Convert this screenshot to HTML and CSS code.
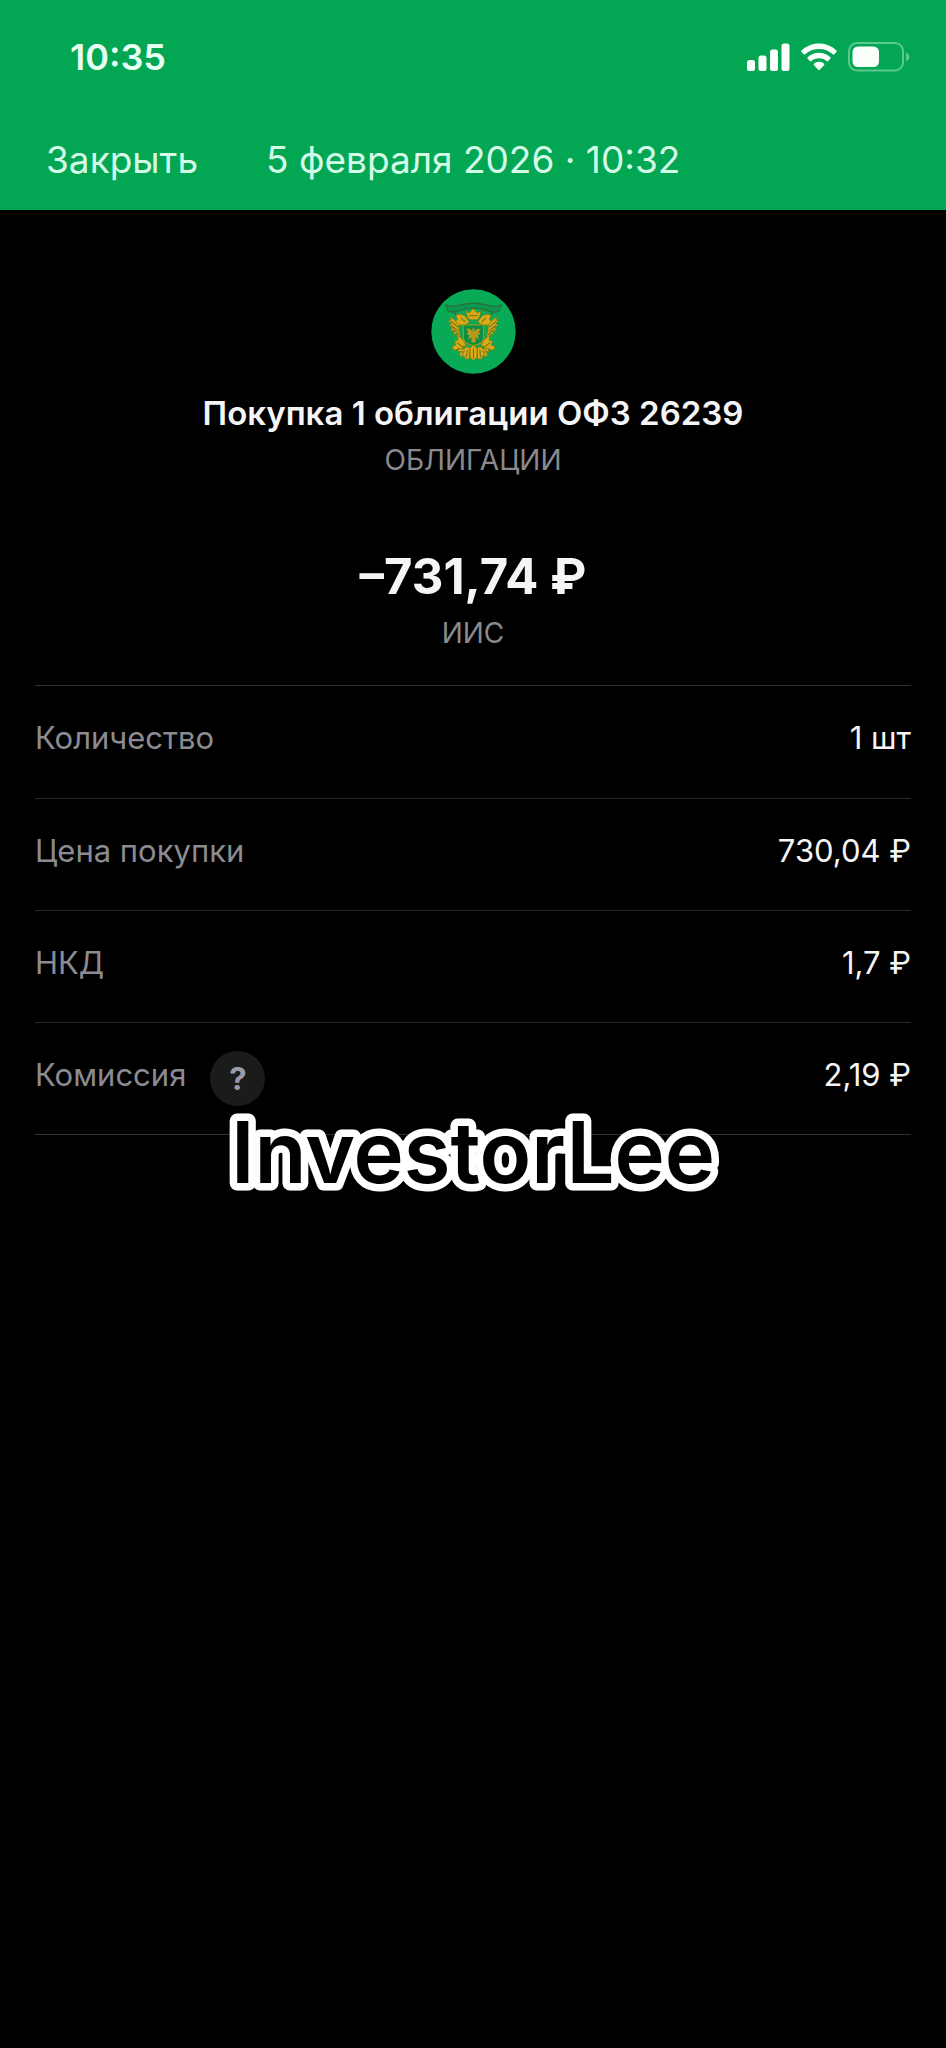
FILE: index.html
```
<!DOCTYPE html>
<html lang="ru">
<head>
    <meta charset="UTF-8">
    <meta name="viewport" content="width=device-width, initial-scale=1.0">
    <title>Покупка 1 облигации ОФЗ 26239</title>
    <link rel="stylesheet" href="styles.css">
</head>
<body>
    <header class="header">
        <div class="status-bar">
            <span class="clock">10:35</span>
            <div class="status-icons">
                <svg class="signal" viewBox="0 0 43 28" aria-hidden="true">
                    <rect x="0" y="17" width="8" height="11" rx="2.5"/>
                    <rect x="11.5" y="12.5" width="8" height="15.5" rx="2.5"/>
                    <rect x="23" y="6.5" width="8" height="21.5" rx="2.5"/>
                    <rect x="34.5" y="0.5" width="8" height="27.5" rx="2.5"/>
                </svg>
                <svg class="wifi" viewBox="0 0 36 28" aria-hidden="true">
                    <path d="M18 0.5C25 0.5 31 3.200 35.500 7.500C36 8 36 8.600 35.500 9.100L33.300 11.300C32.800 11.800 32.200 11.800 31.700 11.300C28 7.900 23.200 6 18 6S8 7.900 4.300 11.300C3.800 11.800 3.200 11.800 2.700 11.300L0.500 9.100C0 8.600 0 8 0.500 7.500C5 3.200 11 0.500 18 0.500Z"/>
                    <path d="M18 9.800C22.500 9.800 26.300 11.500 29.300 14.200C29.800 14.700 29.800 15.300 29.300 15.800L27.100 18C26.600 18.500 26 18.500 25.500 18C23.500 16.200 20.900 15.200 18 15.200S12.500 16.200 10.500 18C10 18.500 9.400 18.500 8.900 18L6.700 15.800C6.200 15.300 6.200 14.700 6.700 14.200C9.700 11.500 13.500 9.800 18 9.800Z"/>
                    <path d="M18 18.800C20 18.800 21.700 19.500 23 20.700C23.500 21.200 23.500 21.800 23 22.300L18.800 26.800C18.300 27.300 17.700 27.300 17.200 26.800L13 22.300C12.500 21.800 12.500 21.200 13 20.700C14.300 19.500 16 18.800 18 18.800Z"/>
                </svg>
                <svg class="battery" viewBox="0 0 62 30" aria-hidden="true">
                    <rect class="battery-frame" x="1" y="1" width="54" height="27.500" rx="8"/>
                    <path class="battery-cap" d="M58 10.500C60 11.300 61.300 13 61.300 15S60 18.700 58 19.500Z"/>
                    <rect x="4.500" y="4.500" width="26.500" height="20.500" rx="5.500"/>
                </svg>
            </div>
        </div>
        <nav class="nav-bar">
            <button class="close-btn" type="button">Закрыть</button>
            <span class="nav-title">5 февраля 2026 · 10:32</span>
        </nav>
    </header>

    <main class="operation">
        <!-- Issuer emblem -->
        <svg class="emblem" viewBox="0 0 254 254" aria-hidden="true">
            <circle cx="127" cy="127" r="126" fill="#08aa55"/>
            <!-- ribbon -->
            <path d="M44 47Q64 57 86 48Q127 37 168 48Q190 57 210 47L203 66Q184 73 168 64Q127 50 86 64Q70 73 51 66Z" fill="#0b9a4d" stroke="#2b7040" stroke-width="4"/>
            <path d="M70 70Q78 84 92 78M184 70Q176 84 162 78" fill="none" stroke="#2b7040" stroke-width="5"/>
            <!-- crown, heads, wings -->
            <g fill="#d9aa16" stroke="#75741c" stroke-width="2">
                <path d="M104 64L114 72L126 58L139 72L149 64L146 82L139 92H115L108 82Z"/>
                <path d="M74 78Q94 70 106 86L114 98L102 108H80L64 100L79 92Z"/>
                <path d="M180 78Q160 70 148 86L140 98L152 108H174L190 100L175 92Z"/>
                <path d="M54 82L68 90L82 107L88 146L76 142L78 134L66 136L70 126L58 124L64 115L54 109L61 102L52 96L60 92Z"/>
                <path d="M200 82L186 90L172 107L166 146L178 142L176 134L188 136L184 126L196 124L190 115L200 109L193 102L202 96L194 92Z"/>
                <path d="M78 138L96 152L106 172L96 170L94 184L82 178L70 184L62 173L74 167L70 156L80 153Z"/>
                <path d="M176 138L158 152L148 172L158 170L160 184L172 178L184 184L192 173L180 167L184 156L174 153Z"/>
                <!-- tail -->
                <path d="M127 168L138 176L137 206L127 213L117 206L116 176Z"/>
                <path d="M108 172L116 178L114 209L102 209L98 198L90 203L84 194L92 186L80 188L83 178L96 180Z"/>
                <path d="M146 172L138 178L140 209L152 209L156 198L164 203L170 194L162 186L174 188L171 178L158 180Z"/>
            </g>
            <g fill="none" stroke="#6b711b" stroke-width="3">
                <path d="M114 80H140M90 86L102 98M164 86L152 98M60 96L80 114M60 108L82 126M66 120L84 136M194 96L174 114M194 108L172 126M188 120L170 136M78 160L94 174M176 160L160 174M127 178V208M108 182L106 204M146 182L148 204M100 184L92 196M154 184L162 196"/>
            </g>
            <!-- shield -->
            <path d="M97 107H157V151Q152 165 127 169Q102 165 97 151Z" fill="#078d45" stroke="#96961d" stroke-width="4"/>
            <path d="M105 119H116L124 127V117H130V127L138 119H149L143 127L148 137L140 136L143 151L133 144V160H121V144L111 151L114 136L106 137L111 127Z" fill="#b69b1b"/>
        </svg>
        <h1 class="operation-name">Покупка 1 облигации ОФЗ 26239</h1>
        <p class="caption">ОБЛИГАЦИИ</p>
        <p class="amount">–731,74 ₽</p>
        <p class="caption">ИИС</p>

        <dl class="details">
            <div class="row">
                <dt>Количество</dt>
                <dd>1 шт</dd>
            </div>
            <div class="row">
                <dt>Цена покупки</dt>
                <dd>730,04 ₽</dd>
            </div>
            <div class="row">
                <dt>НКД</dt>
                <dd>1,7 ₽</dd>
            </div>
            <div class="row">
                <dt>Комиссия <button class="help-btn" type="button">?</button></dt>
                <dd>2,19 ₽</dd>
            </div>
        </dl>
        <svg class="signature">
            <text x="50%" y="72">InvestorLee</text>
        </svg>
    </main>
</body>
</html>
```
FILE: styles.css
```
/* Base Styles */
* {
    box-sizing: border-box;
}

body {
    margin: 0;
    min-height: 100vh;
    font-family: Inter, "Liberation Sans", sans-serif;
    font-size: 31px;
    line-height: 40px;
    background: #000;
    color: #f5f5f7;
}

button {
    padding: 0;
    border: none;
    font-family: inherit;
    cursor: pointer;
}

/* Header Styles */
.header {
    background: #02a653;
    padding: 37px 36px 26px 46px;
}

.status-bar {
    display: flex;
    justify-content: space-between;
    align-items: center;
    padding-left: 24px;
}

.clock {
    font-size: 36px;
    font-weight: 600;
    color: #e8fff4;
}

.status-icons {
    display: flex;
    align-items: center;
    gap: 11px;
    fill: #fafffc;
}

.signal {
    width: 43px;
    height: 28px;
}

.wifi {
    width: 36px;
    height: 28px;
}

.battery {
    width: 62px;
    height: 30px;
}

.battery-frame {
    fill: none;
    stroke: #5cc78f;
    stroke-width: 2;
}

.battery-cap {
    fill: #5cc78f;
}

.nav-bar {
    display: flex;
    align-items: center;
    gap: 68px;
    margin-top: 59px;
}

.close-btn,
.nav-title {
    font-size: 37px;
    line-height: 48px;
    color: #d4fbe8;
}

.close-btn {
    background: none;
}

/* Operation Styles */
.operation {
    position: relative;
    display: flex;
    flex-direction: column;
    align-items: center;
    padding: 79px 35px 0;
}

.emblem {
    width: 85px;
    height: 85px;
}

.operation-name {
    margin: 19px 0 7px;
    font-size: 33px;
    font-weight: 600;
}

.caption {
    margin: 0;
    font-size: 28px;
    color: #89898e;
}

.amount {
    margin: 77px 0 16px;
    font-size: 49px;
    font-weight: 700;
}

/* Details Styles */
.details {
    align-self: stretch;
    margin: 32px 0 0;
    border-top: 1px solid #303032;
    border-bottom: 1px solid #303032;
}

.row {
    display: flex;
    justify-content: space-between;
    height: 112px;
    padding-top: 32px;
}

.row + .row {
    border-top: 1px solid #29292b;
}

.row dt {
    display: flex;
    gap: 24px;
    color: #8b8b91;
}

.row dd {
    margin: 0;
}

.help-btn {
    width: 55px;
    height: 55px;
    margin-top: -4px;
    border-radius: 50%;
    background: #1b1b1c;
    color: #9b9ba8;
    font-size: 31px;
    font-weight: 700;
}

/* Signature over the last divider */
.signature {
    position: absolute;
    left: 0;
    bottom: -64px;
    width: 100%;
    height: 88px;
    overflow: visible;
    pointer-events: none;
}

.signature text {
    font-size: 85px;
    font-weight: 600;
    text-anchor: middle;
    fill: #000;
    stroke: #fff;
    stroke-width: 15px;
    stroke-linejoin: round;
    paint-order: stroke;
}
```
